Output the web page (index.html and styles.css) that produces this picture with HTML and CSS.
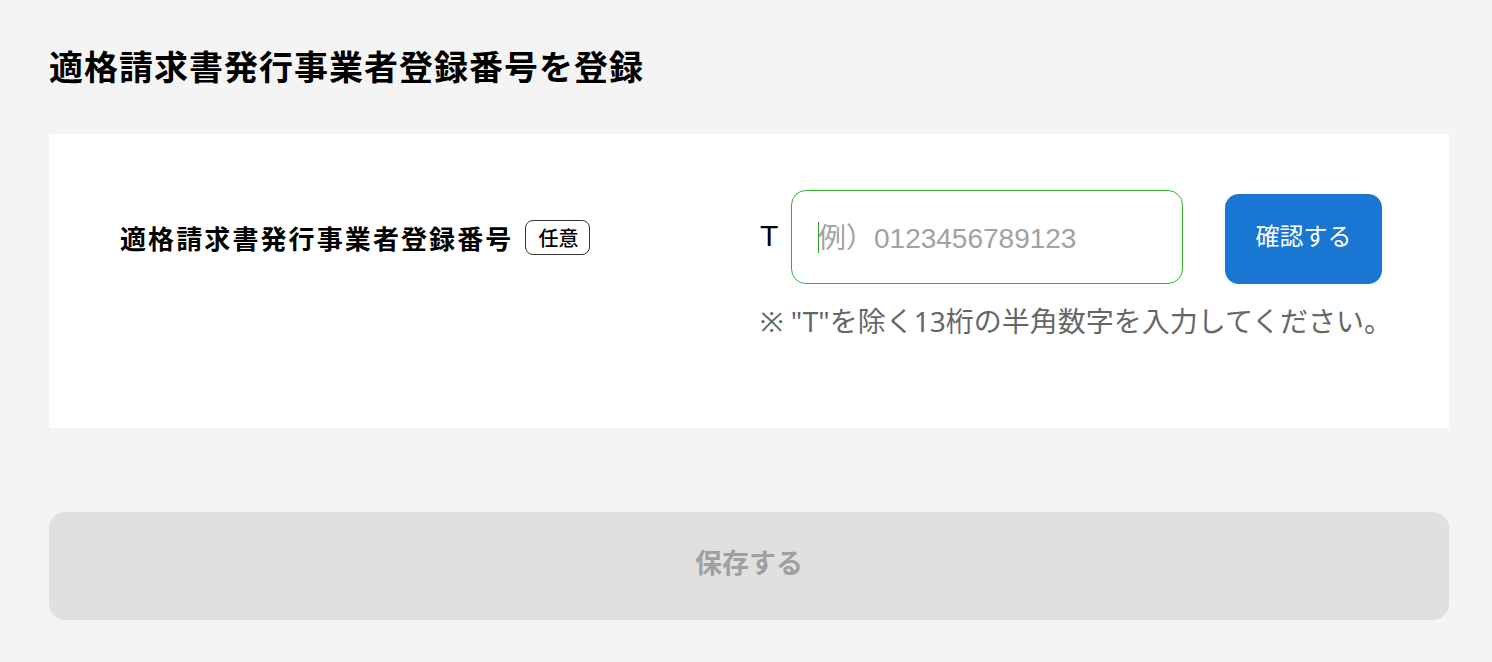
FILE: index.html
```html
<!DOCTYPE html>
<html lang="ja">
<head>
<meta charset="utf-8">
<title>適格請求書発行事業者登録番号を登録</title>
<link rel="stylesheet" href="styles.css">
</head>
<body>
<main class="page">
  <h1 class="title">適格請求書発行事業者登録番号を登録</h1>
  <section class="card">
    <div class="label-col">
      <span class="label">適格請求書発行事業者登録番号</span>
      <span class="badge">任意</span>
    </div>
    <div class="field-col">
      <div class="input-row">
        <span class="prefix">T</span>
        <div class="input"><span class="caret"></span><span class="placeholder">例）0123456789123</span></div>
        <button class="confirm">確認する</button>
      </div>
      <p class="note">※ "T"を除く13桁の半角数字を入力してください。</p>
    </div>
  </section>
  <button class="save">保存する</button>
</main>
</body>
</html>
```
FILE: styles.css
```css
html, body {
  margin: 0;
  padding: 0;
  background: #f4f4f4;
}
body {
  font-family: "Noto Sans CJK JP", "Noto Sans", sans-serif;
  color: #000;
}
.page {
  padding: 40px 43px 0 49px;
}
.title {
  margin: 0 0 43px;
  font-size: 34px;
  line-height: 51px;
  font-weight: 700;
  letter-spacing: 1px;
}
.card {
  background: #fff;
  display: flex;
  align-items: flex-start;
  padding: 56px 67px 0 71px;
  height: 294px;
  box-sizing: border-box;
}
.label-col {
  width: 640px;
  flex-shrink: 0;
  display: flex;
  align-items: center;
  height: 94px;
}
.label {
  font-size: 26px;
  font-weight: 700;
  letter-spacing: 2.1px;
}
.badge {
  margin-left: 12px;
  border: 1px solid #333;
  border-radius: 8px;
  font-size: 20px;
  line-height: 33px;
  padding: 0 11px 0 12px;
  font-weight: 500;
}
.field-col {
  flex: 1;
  min-width: 0;
}
.input-row {
  display: flex;
  align-items: flex-end;
}
.prefix {
  font-family: "Liberation Sans", sans-serif;
  font-size: 30px;
  width: 31px;
  align-self: center;
  padding-bottom: 2px;
}
.input {
  width: 392px;
  height: 94px;
  box-sizing: border-box;
  border: 1px solid #2db52d;
  border-radius: 15px;
  display: flex;
  align-items: center;
  padding: 0 0 3px 26px;
}
.caret {
  width: 1px;
  height: 31px;
  background: #2a9d2a;
  margin-right: -1px;
  margin-top: 4px;
}
.placeholder {
  font-family: "Liberation Sans", "Noto Sans CJK JP", sans-serif;
  font-size: 28px;
  color: #a2a2a2;
}
.confirm {
  margin-left: 42px;
  width: 157px;
  height: 90px;
  border: 0;
  border-radius: 14px;
  background: #1976d2;
  color: #fff;
  font-family: "Noto Sans CJK JP", sans-serif;
  font-size: 24px;
  padding: 0 0 9px;
}
.note {
  margin: 17px 0 0;
  font-family: "Noto Sans", "Noto Sans CJK JP", sans-serif;
  font-size: 28px;
  line-height: 40px;
  color: #666;
  white-space: nowrap;
}
.save {
  display: block;
  width: 1400px;
  height: 108px;
  margin-top: 84px;
  border: 0;
  border-radius: 16px;
  background: #e0e0e0;
  color: #a0a0a0;
  font-family: "Noto Sans CJK JP", sans-serif;
  font-size: 27px;
  font-weight: 700;
  padding: 0 0 9px;
}
```
